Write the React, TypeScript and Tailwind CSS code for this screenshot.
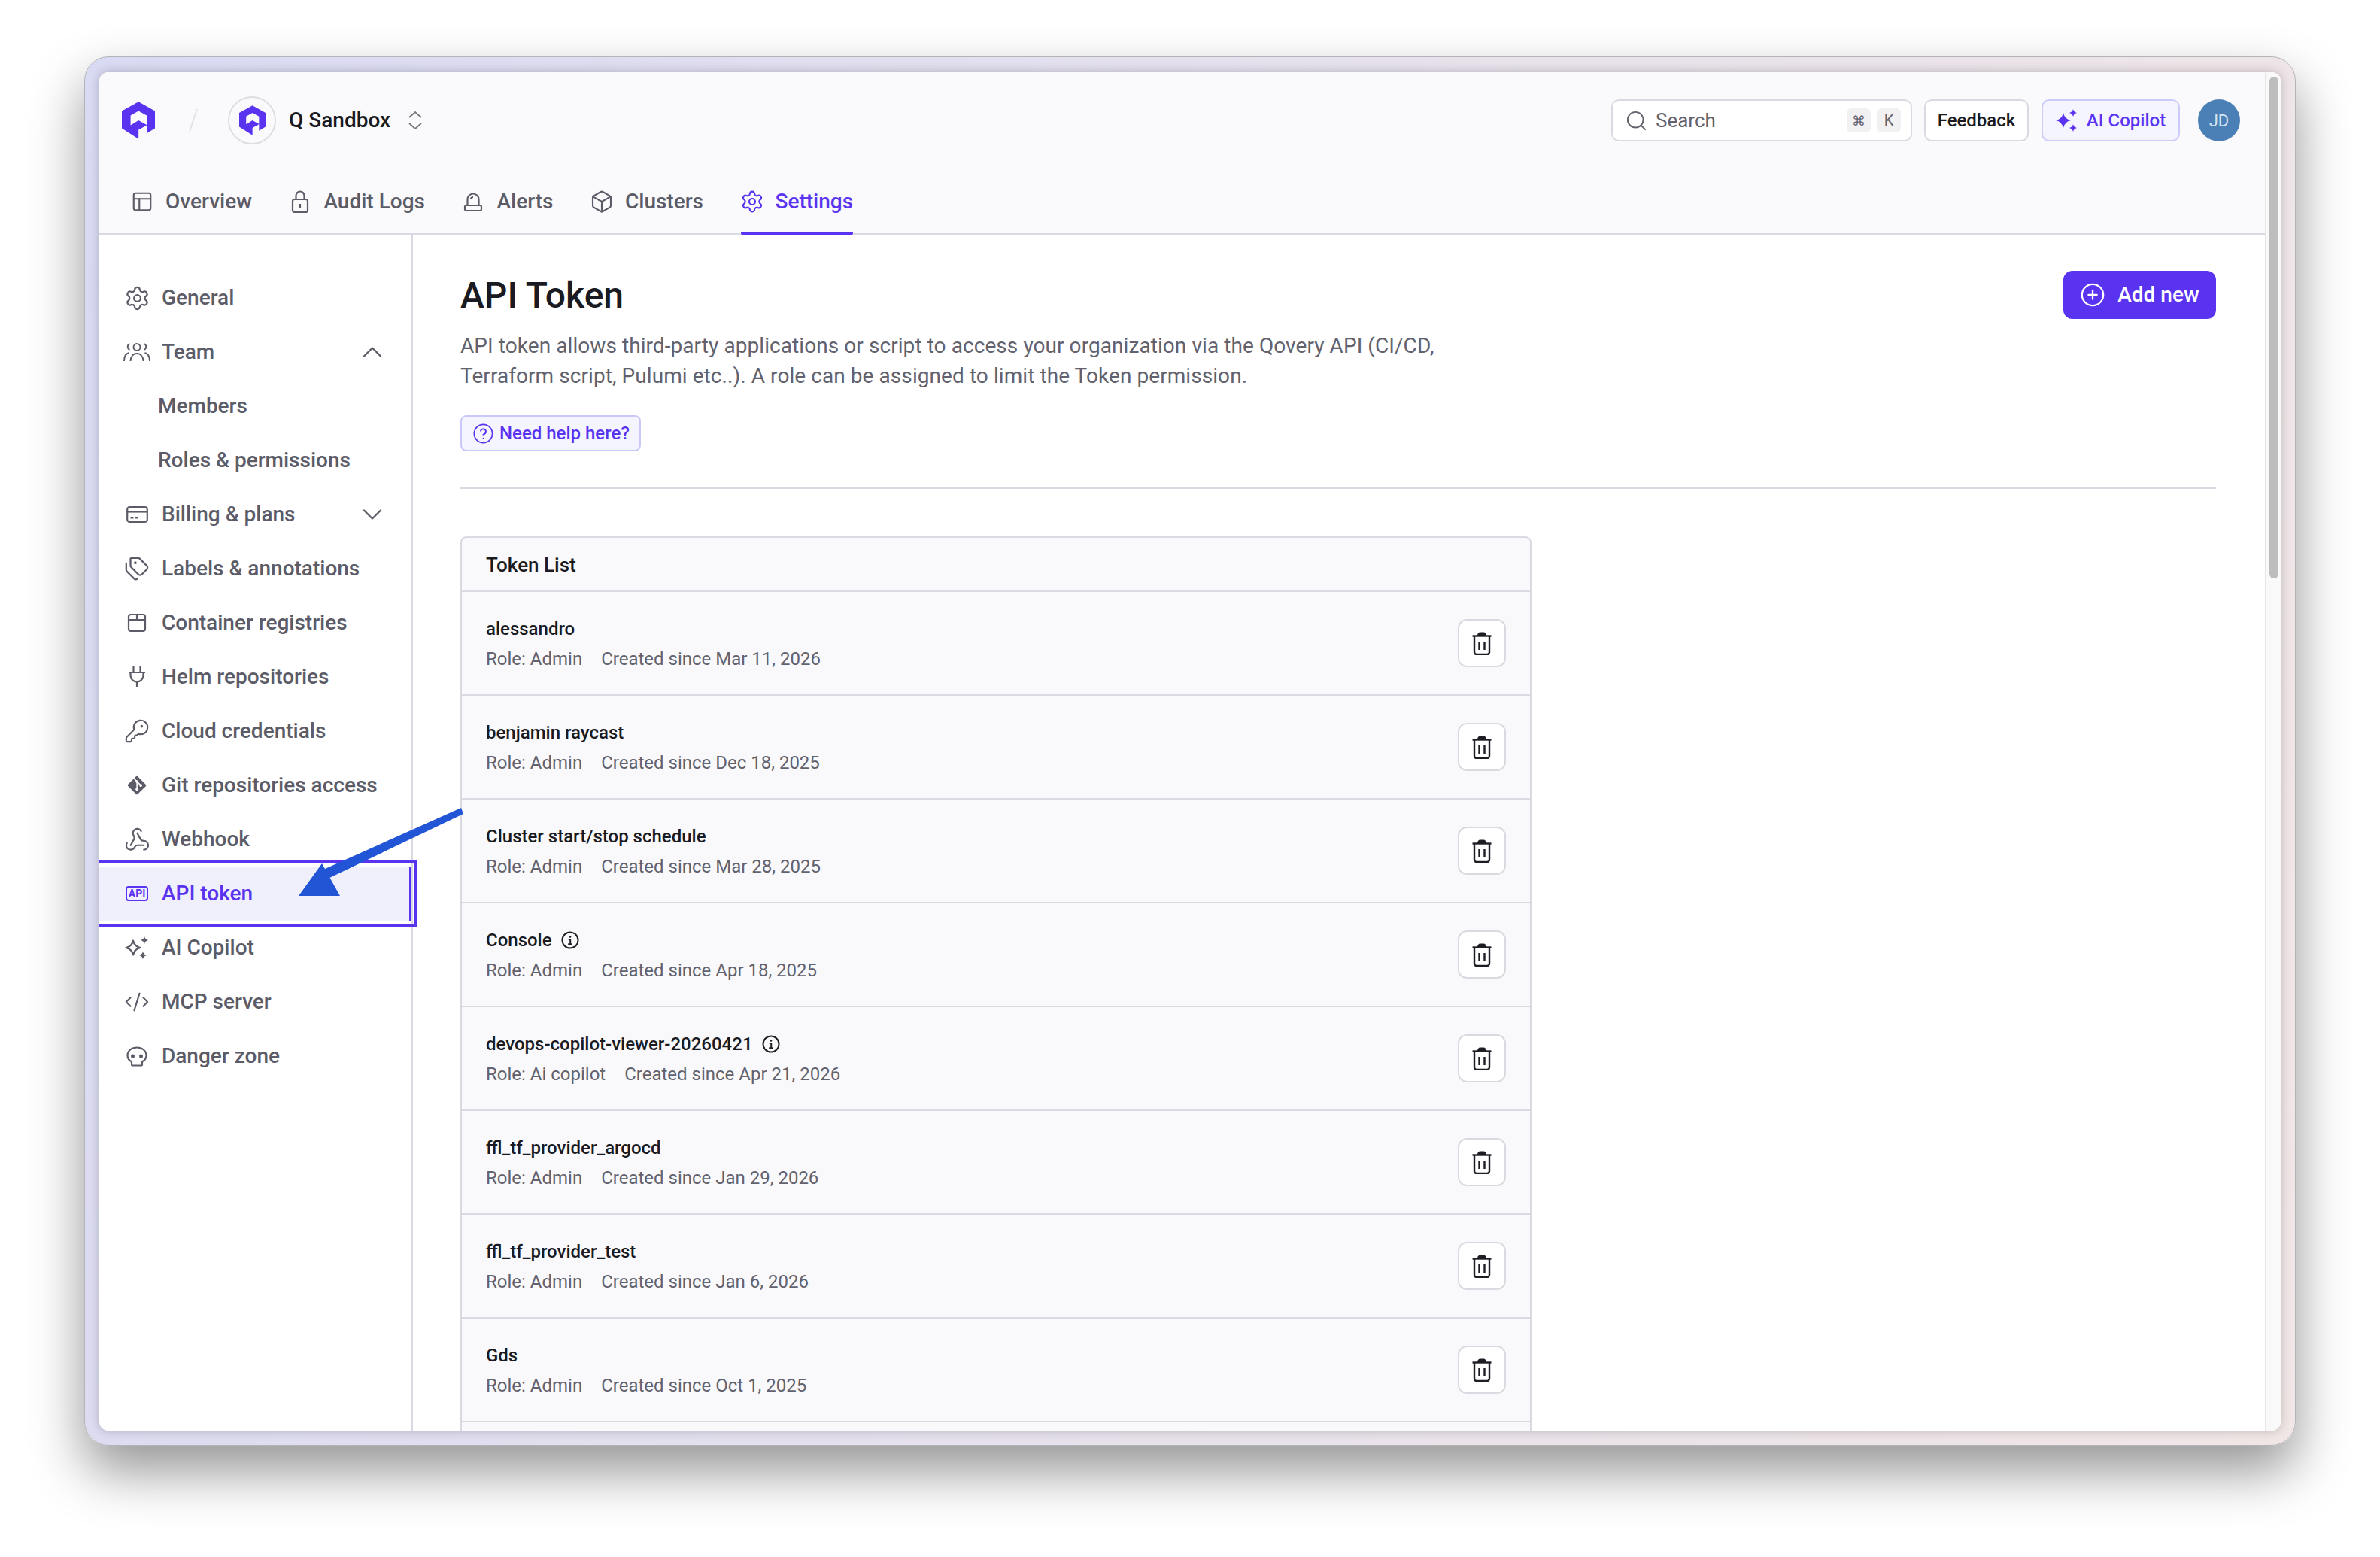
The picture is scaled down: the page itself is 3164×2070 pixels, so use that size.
import React from "react";
import { PanelsTopLeft, Box, Settings, Tags, KeyRound, Webhook, CodeXml, Search, CirclePlus, CircleHelp, ChevronUp, ChevronDown } from "lucide-react";
import { FaGitAlt } from "react-icons/fa6";

const Logo = ({ className }: { className: string }) => (
  <svg viewBox="0 0 133 150" className={className}>
    <path fill="#5a33f0" fillRule="evenodd" d="M67 0L133 37V107L100 127V95L67 113V150L0 107V37ZM67 37L35 55V95L67 75L100 93V55Z" />
  </svg>
);

const Lock = () => (
  <svg width="24" height="30" viewBox="0 0 24 30" fill="none" stroke="currentColor" strokeWidth="2.2">
    <rect x="2" y="12" width="20" height="17" rx="2.5" />
    <path d="M6.5 12V7a5.5 5.5 0 0 1 11 0v5" />
    <path d="M12 18v5" />
  </svg>
);
const Siren = () => (
  <svg width="26" height="26" viewBox="0 0 26 26" fill="none" stroke="currentColor" strokeWidth="2.2">
    <path d="M5.5 18V10a7.5 7.5 0 0 1 15 0v8" />
    <path d="M10 10a3 3 0 0 1 3-3" />
    <rect x="2" y="18" width="22" height="7" rx="2" />
  </svg>
);
const Team = () => (
  <svg width="36" height="26" viewBox="0 0 36 26" fill="none" stroke="currentColor" strokeWidth="1.9">
    <circle cx="18" cy="6.5" r="4.5" />
    <path d="M9.5 25c0-6 3.5-10 8.5-10s8.5 4 8.5 10" />
    <path d="M8.5 2.2a4 4 0 0 0 0 7.6" />
    <path d="M27.5 2.2a4 4 0 0 1 0 7.6" />
    <path d="M1 25c0-6 2.5-10 6.5-11" />
    <path d="M35 25c0-6-2.500-10-6.500-11" />
  </svg>
);
const Card = () => (
  <svg width="29" height="22" viewBox="0 0 29 22" fill="none" stroke="currentColor" strokeWidth="2.2">
    <rect x="1.200" y="1.200" width="26.600" height="19.600" rx="3" />
    <path d="M1.200 7.500h26.600" />
    <path d="M5.500 15.500h4M12 15.500h4" />
  </svg>
);
const Crate = () => (
  <svg width="26" height="26" viewBox="0 0 26 26" fill="none" stroke="currentColor" strokeWidth="2.200">
    <rect x="2" y="2" width="22" height="22" rx="3" />
    <path d="M2 9h22M13 2v7" />
  </svg>
);
const Plug = () => (
  <svg width="24" height="30" viewBox="0 0 24 30" fill="none" stroke="currentColor" strokeWidth="2.200">
    <path d="M7.500 1v8M16.500 1v8M1 9h22" />
    <path d="M3.500 9v4a8.500 8.500 0 0 0 17 0V9" />
    <path d="M12 22v7" />
  </svg>
);
const ApiIcon = () => (
  <span className="flex items-center justify-center w-[30px] h-[20px] rounded-[4px] border-2 border-[#5a33f0] text-[14px] leading-none font-bold text-[#5a33f0] font-[Roboto,sans-serif]">API</span>
);
const star = (cx: number, cy: number, r: number) =>
  `M${cx} ${cy - r}Q${cx + r * 0.18} ${cy - r * 0.18} ${cx + r} ${cy}Q${cx + r * 0.18} ${cy + r * 0.18} ${cx} ${cy + r}Q${cx - r * 0.18} ${cy + r * 0.18} ${cx - r} ${cy}Q${cx - r * 0.18} ${cy - r * 0.18} ${cx} ${cy - r}Z`;
const SparkOutline = () => (
  <svg width="32" height="30" viewBox="0 0 32 30">
    <path d={star(11, 15, 9.500)} fill="none" stroke="currentColor" strokeWidth="2.200" strokeLinejoin="round" />
    <path d={star(26, 5, 5)} fill="currentColor" />
    <path d={star(24, 25, 5)} fill="currentColor" />
  </svg>
);
const SparkFilled = () => (
  <svg width="30" height="30" viewBox="0 0 30 30">
    <path d={star(10, 15, 10)} fill="#5a33f0" />
    <path d={star(23, 5, 5)} fill="#5a33f0" />
    <path d={star(23, 25, 5)} fill="#5a33f0" />
  </svg>
);
const Skull = () => (
  <svg width="28" height="27" viewBox="0 0 28 27" fill="none" stroke="currentColor" strokeWidth="2.200">
    <path d="M14 1.500C7 1.500 1.500 6 1.500 12c0 3.700 2 6.700 5.500 8.300V24a1.500 1.500 0 0 0 1.500 1.500h11A1.500 1.500 0 0 0 21 24v-3.700c3.500-1.600 5.500-4.600 5.500-8.300 0-6-5.500-10.500-12.500-10.500Z" />
    <circle cx="8.500" cy="13" r="2.500" fill="currentColor" stroke="none" />
    <circle cx="19.500" cy="13" r="2.500" fill="currentColor" stroke="none" />
  </svg>
);
const Trash = () => (
  <svg width="26" height="31" viewBox="0 0 26 31" fill="none" stroke="#1d1d25" strokeWidth="2.400">
    <path d="M7 5c0-3 2-4.500 3.500-4.500h5C17 .5 19 2 19 5Z" fill="#1d1d25" stroke="none" />
    <path d="M.5 5.500h25" />
    <path d="M3 6v21a3 3 0 0 0 3 3h14a3 3 0 0 0 3-3V6" />
    <path d="M9.500 13v11M16.500 13v11" />
  </svg>
);
const Info = () => (
  <svg width="24" height="24" viewBox="0 0 24 24" fill="none" stroke="#1d1d25" strokeWidth="2">
    <circle cx="12" cy="12" r="10.500" />
    <circle cx="12" cy="7.500" r="1.300" fill="#1d1d25" stroke="none" />
    <path d="M9.700 11h2.500v6M9.200 17.200h5.800" />
  </svg>
);
const UpDown = () => (
  <svg width="18" height="24" viewBox="0 0 18 24" fill="none" stroke="#77777f" strokeWidth="1.800">
    <path d="M1 8l8-7 8 7M1 16l8 7 8-7" />
  </svg>
);

const tabs = [
  { label: "Overview", icon: <PanelsTopLeft size={30} strokeWidth={1.700} className="shrink-0" /> },
  { label: "Audit Logs", icon: <Lock /> },
  { label: "Alerts", icon: <Siren /> },
  { label: "Clusters", icon: <Box size={32} strokeWidth={1.600} className="shrink-0" /> },
  { label: "Settings", icon: <Settings size={32} strokeWidth={1.600} className="shrink-0" />, active: true },
];

type Nav = { label: string; icon?: React.ReactNode; sub?: boolean; chevron?: "up" | "down"; active?: boolean };
const nav: Nav[] = [
  { label: "General", icon: <Settings size={35} strokeWidth={1.500} className="shrink-0" /> },
  { label: "Team", icon: <Team />, chevron: "up" },
  { label: "Members", sub: true },
  { label: "Roles & permissions", sub: true },
  { label: "Billing & plans", icon: <Card />, chevron: "down" },
  { label: "Labels & annotations", icon: <Tags size={34} strokeWidth={1.600} className="shrink-0" /> },
  { label: "Container registries", icon: <Crate /> },
  { label: "Helm repositories", icon: <Plug /> },
  { label: "Cloud credentials", icon: <KeyRound size={34} strokeWidth={1.500} className="shrink-0" /> },
  { label: "Git repositories access", icon: <FaGitAlt size={28} /> },
  { label: "Webhook", icon: <Webhook size={35} strokeWidth={1.500} className="shrink-0" /> },
  { label: "API token", icon: <ApiIcon />, active: true },
  { label: "AI Copilot", icon: <SparkOutline /> },
  { label: "MCP server", icon: <CodeXml size={34} strokeWidth={1.500} className="shrink-0" /> },
  { label: "Danger zone", icon: <Skull /> },
];

const tokens = [
  { name: "alessandro", role: "Admin", date: "Mar 11, 2026" },
  { name: "benjamin raycast", role: "Admin", date: "Dec 18, 2025" },
  { name: "Cluster start/stop schedule", role: "Admin", date: "Mar 28, 2025" },
  { name: "Console", role: "Admin", date: "Apr 18, 2025", info: true },
  { name: "devops-copilot-viewer-20260421", role: "Ai copilot", date: "Apr 21, 2026", info: true },
  { name: "ffl_tf_provider_argocd", role: "Admin", date: "Jan 29, 2026" },
  { name: "ffl_tf_provider_test", role: "Admin", date: "Jan 6, 2026" },
  { name: "Gds", role: "Admin", date: "Oct 1, 2025" },
];

export default function App() {
  return (
    <div className="relative w-[3164px] h-[2070px] overflow-hidden bg-white pt-[75px] pl-[112px] font-[Roboto,sans-serif]">
      <div className="w-[2940px] h-[1847px] rounded-[32px] border border-[#b4b4b8] bg-[linear-gradient(105deg,#d9daf3,#e6e1ec_50%,#f1e6e6)] pt-[20px] pb-[19px] px-[19px] shadow-[0_34px_70px_rgba(0,0,0,0.42)]">
        <div className="flex h-full overflow-hidden rounded-[12px] bg-white shadow-[0_0_14px_rgba(0,0,0,0.22)]">
          <div className="flex flex-col flex-1 min-w-0">
            {/* Header */}
            <header className="bg-[#fafafc] border-b-2 border-[#d9d9e2] pt-[32px] shrink-0">
              <div className="flex items-center h-[64px] pl-[30px] pr-[33px]">
                <Logo className="w-[44px] h-[50px]" />
                <svg width="14" height="32" viewBox="0 0 14 32" className="ml-[44px]">
                  <path d="M12 1L2 31" stroke="#e2e2e8" strokeWidth="2" />
                </svg>
                <div className="ml-[39px] flex items-center justify-center w-[64px] h-[64px] rounded-full border-2 border-[#dededf]">
                  <Logo className="w-[35px] h-[40px]" />
                </div>
                <span className="ml-[17px] text-[28px] font-medium text-[#1a1a22]">Q Sandbox</span>
                <span className="ml-[24px] flex"><UpDown /></span>
                <div className="ml-auto flex items-center h-[56px] w-[400px] rounded-[10px] border-2 border-[#d9d9e2] bg-white pl-[16px] pr-[13px]">
                  <Search size={31} strokeWidth={1.500} className="shrink-0 text-[#63636d]" />
                  <span className="ml-[10px] text-[26px] text-[#63636d]">Search</span>
                  <span className="ml-auto flex items-center justify-center w-[32px] h-[32px] rounded-[6px] bg-[#f1f1f4] text-[18px] text-[#63636d]">⌘</span>
                  <span className="ml-[8px] flex items-center justify-center w-[32px] h-[32px] rounded-[6px] bg-[#f1f1f4] text-[20px] text-[#63636d]">K</span>
                </div>
                <button className="ml-[16px] flex items-center justify-center w-[139px] h-[56px] rounded-[10px] border-2 border-[#d9d9e2] bg-white text-[24px] font-medium text-[#1a1a22]">Feedback</button>
                <button className="ml-[17px] flex items-center justify-center gap-[11px] w-[184px] h-[56px] rounded-[10px] border-2 border-[#ccccfb] bg-[#f5f5ff] text-[24px] font-medium text-[#5a33f0]">
                  <SparkFilled />
                  AI Copilot
                </button>
                <div className="ml-[24px] flex items-center justify-center w-[56px] h-[56px] rounded-full bg-[#4a80b5] text-[22px] text-[#d5e2ef]">JD</div>
              </div>
              <nav className="flex gap-[49.5px] pl-[42px] mt-[32px] -mb-[2px]">
                {tabs.map((t) => (
                  <div
                    key={t.label}
                    className={
                      t.active
                        ? "flex items-center gap-[16px] h-[88px] pt-[3px] border-b-[4px] border-[#5a33f0] rounded-b-[2px] text-[#5a33f0]"
                        : "flex items-center gap-[16px] h-[88px] pt-[3px] border-b-[4px] border-transparent text-[#5c5c68]"
                    }
                  >
                    <span className="flex items-center justify-center w-[30px]">{t.icon}</span>
                    <span className="text-[28px] font-medium whitespace-nowrap">{t.label}</span>
                  </div>
                ))}
              </nav>
            </header>

            <div className="flex flex-1 min-h-0">
              {/* Sidebar */}
              <aside className="w-[417px] shrink-0 border-r-2 border-[#d9d9e2] pt-[48px]">
                {nav.map((n) => (
                  <div
                    key={n.label}
                    className={
                      n.active
                        ? "flex items-center h-[72px] pl-[30px] pr-[35px] bg-[#eff0fc] border-r-[3px] border-[#5a33f0] text-[#5a33f0]"
                        : n.sub
                          ? "flex items-center h-[72px] pl-[78px] pr-[30px] text-[#5c5c68]"
                          : "flex items-center h-[72px] pl-[30px] pr-[30px] text-[#5c5c68]"
                    }
                  >
                    {n.icon && <span className="flex items-center justify-center w-[40px] mr-[13px]">{n.icon}</span>}
                    <span className="text-[28px] font-medium whitespace-nowrap">{n.label}</span>
                    {n.chevron === "up" && <ChevronUp size={44} strokeWidth={1.300} className="ml-auto shrink-0" />}
                    {n.chevron === "down" && <ChevronDown size={44} strokeWidth={1.300} className="ml-auto shrink-0" />}
                  </div>
                ))}
              </aside>

              {/* Main */}
              <main className="flex-1 min-w-0 overflow-hidden pt-[48px] pl-[63px] pr-[65px]">
                <div className="flex items-start justify-between">
                  <h1 className="pt-[2px] text-[48px] leading-[62px] font-medium text-[#1a1a22]">API Token</h1>
                  <button className="flex items-center justify-center gap-[16px] w-[203px] h-[64px] rounded-[12px] bg-[#5a33f0] text-[28px] font-medium text-white">
                    <CirclePlus size={34} strokeWidth={1.600} className="shrink-0" />
                    Add new
                  </button>
                </div>
                <p className="mt-[16px] text-[28px] leading-[40px] tracking-[0.07px] text-[#62626e]">
                  <span className="block whitespace-nowrap">API token allows third-party applications or script to access your organization via the Qovery API (CI/CD,</span>
                  <span className="block whitespace-nowrap">Terraform script, Pulumi etc..). A role can be assigned to limit the Token permission.</span>
                </p>
                <button className="mt-[32px] flex items-center gap-[7px] h-[48px] w-[240px] pl-[14px] rounded-[8px] border-2 border-[#c8c8fb] bg-[#f5f5ff] text-[24px] font-medium text-[#5a33f0]">
                  <CircleHelp size={29} strokeWidth={1.500} className="shrink-0" />
                  Need help here?
                </button>
                <div className="mt-[48px] h-[2px] bg-[#d9d9e2]" />

                <section className="mt-[63px] w-[1424px] rounded-t-[8px] border-2 border-[#d9d9e2] bg-[#f9f9fb]">
                  <div className="flex items-center h-[72px] pl-[32px] border-b-2 border-[#d9d9e2] text-[26px] font-medium text-[#1a1a22]">
                    <span className="pt-[2px]">Token List</span>
                  </div>
                  {tokens.map((t) => (
                    <div key={t.name} className="flex items-center justify-between h-[138px] pl-[32px] pr-[32px] border-b-2 border-[#d9d9e2]">
                      <div className="pt-[2px]">
                        <div className="flex items-center gap-[12px] text-[24px] leading-[32px] font-medium text-[#1a1a22]">
                          {t.name}
                          {t.info && <Info />}
                        </div>
                        <div className="mt-[8px] flex gap-[25px] text-[24px] leading-[32px] text-[#62626e]">
                          <span>Role: {t.role}</span>
                          <span>Created since {t.date}</span>
                        </div>
                      </div>
                      <button className="flex items-center justify-center w-[64px] h-[64px] rounded-[12px] border-2 border-[#d9d9e2] bg-white">
                        <Trash />
                      </button>
                    </div>
                  ))}
                  <div className="h-[138px]" />
                </section>
              </main>
            </div>
          </div>

          {/* Scrollbar */}
          <div className="w-[21px] shrink-0 border-l-2 border-[#e6e6e6] bg-[#f9f9f9] pt-[6px] pl-[4px]">
            <div className="w-[12px] h-[667px] rounded-full bg-[#bdbdbd]" />
          </div>
        </div>
      </div>

      {/* Annotation drawn over the screenshot */}
      <div className="absolute left-[132px] top-[1144px] w-[422px] h-[88px] border-4 border-l-0 border-[#5a33f0]" />
      <svg className="absolute left-[380px] top-[1060px]" width="250" height="140" viewBox="0 0 250 140">
        <path d="M233 14L236 22L56 108L50 96Z" fill="#2255d6" />
        <path d="M48 88L72 131H17Z" fill="#2255d6" />
      </svg>
    </div>
  );
}
